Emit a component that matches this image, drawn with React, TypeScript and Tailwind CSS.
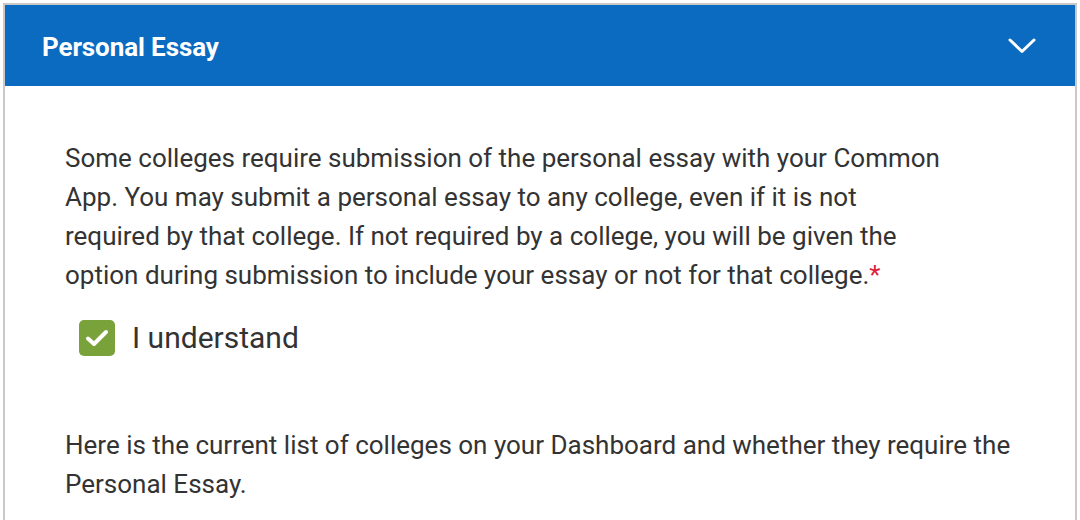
import React from 'react';

const App: React.FC = () => {
  return (
    <div className="w-[1080px] h-[520px] overflow-hidden bg-white pt-[3px] px-[3px]" style={{ fontFamily: 'Roboto, "Liberation Sans", sans-serif' }}>
      <div className="border-2 border-b-0 border-[#c9c9c9] h-[520px]">
        <div className="h-[81px] bg-[#0a6bc1] flex items-center justify-between pl-[37px] pr-[39px]">
          <h2 className="pt-[3px] text-white text-[26px] font-bold tracking-[-0.1px]">Personal Essay</h2>
          <svg width="28" height="16" viewBox="0 0 28 16" fill="none">
            <path d="M2 2 L14 13.5 L26 2" stroke="white" strokeWidth="3" strokeLinecap="round" strokeLinejoin="round" />
          </svg>
        </div>
        <div className="pl-[60px] pr-[20px] pt-[53px] text-[#333333]">
          <p className="text-[26px] leading-[39px] max-w-[890px]">
            Some colleges require submission of the personal essay with your Common App. You may submit a personal essay to any college, even if it is not required by that college. If not required by a college, you will be given the option during submission to include your essay or not for that college.
            <span className="text-[#e0203a]">*</span>
          </p>
          <label className="mt-[20px] ml-[14px] flex items-center gap-[17px]">
            <span className="w-[36px] h-[36px] rounded-[5px] bg-[#7aa23a] flex items-center justify-center">
              <svg width="24" height="20" viewBox="0 0 24 20" fill="none">
                <path d="M3 10.5 L9 16 L21 4" stroke="white" strokeWidth="4" strokeLinecap="round" strokeLinejoin="round" />
              </svg>
            </span>
            <span className="text-[30px] text-[#333333]">I understand</span>
          </label>
          <p className="mt-[66px] text-[26px] leading-[39px] max-w-[980px]">
            Here is the current list of colleges on your Dashboard and whether they require the Personal Essay.
          </p>
        </div>
      </div>
    </div>
  );
};

export default App;
